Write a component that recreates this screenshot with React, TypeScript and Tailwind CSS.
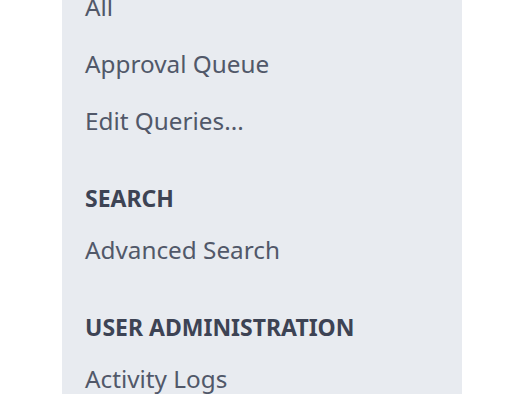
const sections = [
    { title: null, items: ["All", "Approval Queue", "Edit Queries..."] },
    { title: "SEARCH", items: ["Advanced Search"] },
    { title: "USER ADMINISTRATION", items: ["Activity Logs"] },
]

const App = () => {
    return <div className="w-[526px] h-[394px] overflow-hidden bg-white" style={{ fontFamily: '"Noto Sans", "Open Sans", sans-serif' }}>
        <div className="ml-[62px] w-[400px] h-full overflow-hidden bg-[#e8ebf0] pl-[23px]">
            <div className="-mt-[22px]">
                {sections.map((section, i) => (
                    <div key={i}>
                        {section.title && (
                            <h3 className="pt-[27px] leading-[45px] text-[23px] font-bold text-[#3d4354]">{section.title}</h3>
                        )}
                        {section.items.map(item => (
                            <a key={item} href="#" className="block h-[57px] leading-[57px] text-[24.3px] text-[#515869]">{item}</a>
                        ))}
                    </div>
                ))}
            </div>
        </div>
    </div>
}

export default App
